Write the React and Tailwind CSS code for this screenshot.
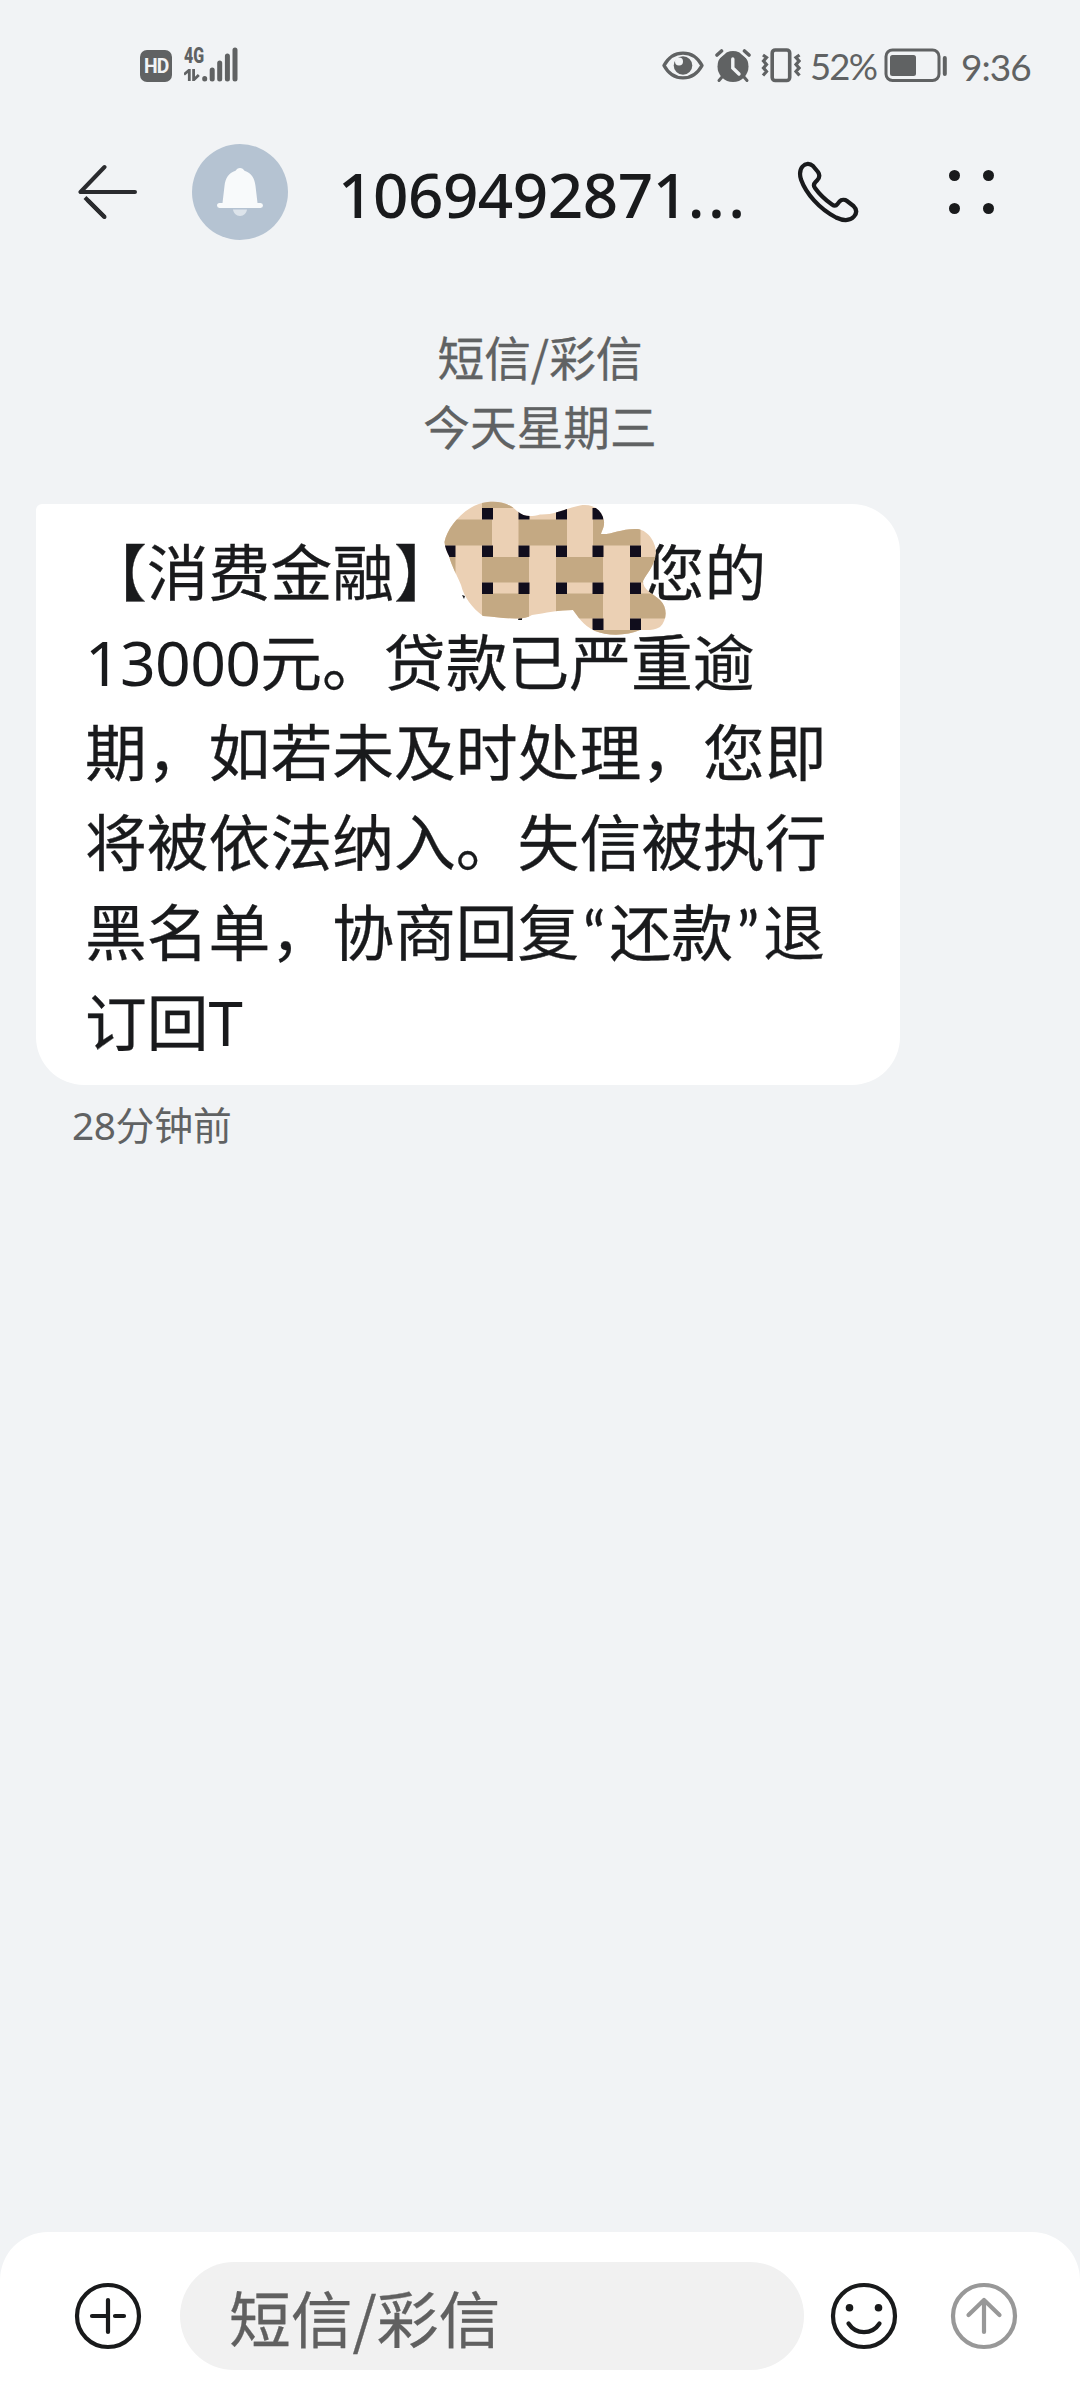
const CJK = "font-['Noto_Sans_CJK_SC',sans-serif]";

function Num({ className = '', children }) {
  return <span className={`font-['Noto_Sans',sans-serif] [-webkit-text-stroke:0px] ${className}`}>{children}</span>;
}

function Quote({ children }) {
  return <span className="inline-block w-[30px] text-center font-['Lato',sans-serif]">{children}</span>;
}

function StatusBar() {
  return (
    <div className="flex h-[130px] justify-between pt-[40px] pr-[49px] pl-[140px] text-[#606263]">
      <div className="flex items-start">
        <div className="mt-[10px] flex h-[32px] w-[32px] items-center justify-center rounded-[7px] bg-[#606263] font-['Roboto',sans-serif] text-[21px] leading-none font-bold tracking-[-1px] text-[#f1f3f5]">
          <span className="scale-x-[0.92]">HD</span>
        </div>
        <div className="mt-[7px] ml-[12px] flex w-[18px] flex-col">
          <span className="block origin-left scale-x-[0.74] font-['Roboto',sans-serif] text-[21.5px] leading-[17px] font-black">4G</span>
          <svg className="mt-[5px]" width="16" height="12" viewBox="0 0 16 12" fill="none" stroke="currentColor" strokeWidth="2.8">
            <path d="M0 5.500L5.300 1V12M9.600 0V11L14.800 6" />
          </svg>
        </div>
        <svg className="mt-[7px]" width="36" height="36" viewBox="0 0 36 36" stroke="currentColor" strokeWidth="5" strokeLinecap="round">
          <path d="M2.700 31.500V32M10.200 23V32M17.700 16V32M25.400 9V32M33 3V32" />
        </svg>
      </div>
      <div className="flex items-start">
        <svg className="mt-[11px]" width="42" height="29" viewBox="0 0 42 29">
          <path d="M2 14.500C11-2 31-2 40 14.500C31 31 11 31 2 14.500Z" fill="none" stroke="currentColor" strokeWidth="3.400" strokeLinejoin="round" />
          <circle cx="21" cy="14.500" r="9.300" fill="currentColor" />
          <circle cx="17" cy="10.500" r="4" fill="#f1f3f5" />
        </svg>
        <svg className="mt-[9px] ml-[11px]" width="36" height="34" viewBox="0 0 36 34" fill="none" stroke="currentColor" strokeWidth="3" strokeLinecap="round">
          <circle cx="18" cy="17.500" r="15.500" fill="currentColor" stroke="none" />
          <path d="M7 28L4 31.500M29 28L32 31.500" />
          <path d="M2 7L8 2M34 7L28 2" stroke="#f1f3f5" strokeWidth="7" />
          <path d="M2 6L6.500 2M34 6L29.500 2" strokeWidth="3.600" />
          <path d="M17.800 10V19L24 25" stroke="#f1f3f5" strokeWidth="3.400" />
        </svg>
        <svg className="mt-[8px] ml-[10px]" width="40" height="35" viewBox="0 0 40 35" fill="none" stroke="currentColor" strokeWidth="3.600">
          <rect x="11.200" y="2" width="17.500" height="30.500" rx="3" />
          <path d="M2 7L5.500 9.500L2.500 13L5.500 16.500L2.500 20L5.500 23.500L2 27.500M38.500 7L35 9.500L38 13L35 16.500L38 20L35 23.500L38.500 27.500" strokeWidth="3.200" />
        </svg>
        <span className="ml-[9px] w-[67px] font-['Lato',sans-serif] text-[36.500px] leading-[53px] tracking-[-1.800px]">52%</span>
        <svg className="mt-[8px] ml-[7px]" width="64" height="35" viewBox="0 0 64 35">
          <rect x="2" y="2" width="53" height="30.500" rx="6.500" fill="none" stroke="currentColor" strokeWidth="3" />
          <rect x="6" y="7" width="26" height="21" rx="2.500" fill="currentColor" />
          <path d="M60.800 10V26" stroke="currentColor" strokeWidth="4" strokeLinecap="round" />
        </svg>
        <span className="ml-[13px] w-[70px] font-['Lato',sans-serif] text-[37px] leading-[53px] tracking-[-1px] whitespace-nowrap">9:36</span>
      </div>
    </div>
  );
}

function Header() {
  return (
    <div className="flex h-[124px] items-center pl-[78px] text-[#191a1c]">
      <svg width="60" height="56" viewBox="0 0 60 56" fill="none" stroke="#2a2b2e" strokeWidth="4" strokeLinecap="round">
        <path d="M26.500 3L2.500 28H57" strokeLinejoin="round" />
        <path d="M26.500 53L7 33.500" strokeLinecap="butt" />
        <path d="M26.500 53L10 36.500" />
      </svg>
      <div className="ml-[54px] flex h-[96px] w-[96px] items-center justify-center rounded-full bg-[#b5c3d2]">
        <svg width="46" height="50" viewBox="0 0 46 50">
          <path d="M16 42.500H30C29.500 46 27 49 23 49S16.500 46 16 42.500Z" fill="#dde4eb" />
          <path d="M23 1C25 1 26.500 2.300 27.500 3.800C34.500 6 37.500 11 38.500 19L40.500 36H43.500A2.500 2.500 0 0 1 43.500 41H2.500A2.500 2.500 0 0 1 2.500 36H5.500L7.500 19C8.500 11 11.500 6 18.500 3.800C19.500 2.300 21 1 23 1Z" fill="#f8fafb" />
        </svg>
      </div>
      <h1 className="mt-[4px] ml-[50px] w-[410px] font-['Noto_Sans',sans-serif] text-[62px] leading-[90px] font-medium tracking-[-0.500px] whitespace-nowrap">
        1069492871<span className="tracking-[3.400px]">...</span>
      </h1>
      <svg className="ml-[49px]" width="62" height="62" viewBox="0 0 62 62" fill="none" stroke="currentColor" strokeWidth="4.200" strokeLinejoin="round">
        <path d="M5.500 5.500C8.500 2 13 2 16 5L21 11C23 14 22.500 17 20 19.500L18.500 21C16.500 23 16.500 25 18 27C23 34 28.500 39 35 43.500C37 45 39 45 40.500 43L42.500 40.500C44.500 38.500 48 38.500 50 40L56.500 45C60 48.500 60 52 57 55.500C53 60 46.500 60 39 56.500C22 47.500 9 32.500 4 18.500C2.500 13.500 2.500 9 5.500 5.500Z" />
      </svg>
      <div className="mb-[1px] ml-[90px] grid grid-cols-2 gap-x-[23px] gap-y-[22px]">
        <i className="size-[11px] rounded-full bg-current" />
        <i className="size-[11px] rounded-full bg-current" />
        <i className="size-[11px] rounded-full bg-current" />
        <i className="size-[11px] rounded-full bg-current" />
      </div>
    </div>
  );
}

const KNOTS = [508, 545.5, 582.5, 618.5].flatMap((y) =>
  [444.5, 482, 518.5, 556, 592.5, 630].map((x) => ({ x, y })),
);

function Mosaic() {
  return (
    <svg className="absolute top-[-4px] left-[406px]" width="230" height="142" viewBox="442 500 230 142">
      <defs>
        <clipPath id="blob">
          <path d="M444.500 542C447 528 463 508 482 503C497 499.500 509 503 517 511C524 517 531 517 540 514.500C556 515 566 508 580 505.500C592 503.500 602 509 604 521C604.500 528 602 530 601 534C611 535 622 528 638 529C649 531 656 543 656 553C654 568 646 574 643 581C643 590 652 593 660 600C668 608 667 620 660 627C654 631 646 630 640 630C627 636 607 636 595 631C582 625 578 616 573 610C559 610 545 613 532 615C522 622 501 617 483 616C472 608 464 597 461 585C456 573 452 567 449 556C447 552 445 548 444.500 542Z" />
        </clipPath>
      </defs>
      <path d="M462 595L465 596L464 599Z M519 617H522V620H518Z" fill="#191a1c" />
      <g clipPath="url(#blob)">
        <rect x="442" y="500" width="230" height="142" fill="#ebd0b4" />
        <path
          fill="#c4a983"
          d="M482 500H529V508H482Z M442 519.500H492V545.500H442Z M518.500 519.500H567V545.500H518.500Z M593 519.500H640.500V545.500H593Z M442 557H455.500V582.500H442Z M482 557H529V582.500H482Z M556 557H603V582.500H556Z M630 557H672V582.500H630Z M482 593.500H529V618.500H482Z M556 593.500H603V618.500H556Z M630 593.500H672V618.500H630Z M593 630H640V642H593Z"
        />
        {KNOTS.map((k) => (
          <rect key={`${k.x}-${k.y}`} x={k.x} y={k.y} width="11" height="11.500" fill="#100d1c" />
        ))}
      </g>
    </svg>
  );
}

function Line({ children }) {
  return <p className="h-[90px]">{children}</p>;
}

function Message() {
  return (
    <div className={`relative mt-[45px] ml-[36px] h-[581px] w-[864px] rounded-[48px] rounded-tl-[6px] bg-white pt-[20px] pl-[49px] text-[61.800px] leading-[90px] whitespace-nowrap text-[#191a1c] [-webkit-text-stroke:0.3px_#191a1c] ${CJK}`}>
      <Line>【消费金融】<span className="ml-[187px]">您的</span></Line>
      <Line><Num className="text-[62.500px] tracking-[-0.700px]">13000</Num>元。贷款已严重逾</Line>
      <Line>期，如若未及时处理，您即</Line>
      <Line>将被依法纳入。失信被执行</Line>
      <Line>
        黑名单，协商回复<Quote>“</Quote>还款<Quote>”</Quote>退
      </Line>
      <Line>订回<Num>T</Num></Line>
      <Mosaic />
    </div>
  );
}

function Composer() {
  return (
    <div className="flex h-[168px] items-start rounded-t-[48px] bg-white pt-[30px] pl-[74px] text-[#191a1b]">
      <svg className="mt-[20px]" width="68" height="68" viewBox="0 0 68 68" fill="none" stroke="currentColor" strokeWidth="4.200" strokeLinecap="round">
        <circle cx="34" cy="34" r="31" />
        <path d="M34 18V50M18 34H34M41 34H50" />
      </svg>
      <div className={`ml-[38px] h-[108px] w-[624px] rounded-full bg-[#f1f1f1] pl-[49px] text-[61.800px] leading-[109px] text-[#606060] [-webkit-text-stroke:0.3px_#606060] ${CJK}`}>
        短信/彩信
      </div>
      <svg className="mt-[20px] ml-[26px]" width="68" height="68" viewBox="0 0 68 68" fill="none" stroke="currentColor" strokeWidth="4.200" strokeLinecap="round">
        <circle cx="34" cy="34" r="31" />
        <path d="M18.500 41.500C26 53 42 53 49.500 41.500" />
        <circle cx="19.500" cy="25.700" r="3.800" fill="currentColor" stroke="none" />
        <circle cx="48.500" cy="25.700" r="3.800" fill="currentColor" stroke="none" />
      </svg>
      <svg className="mt-[20px] ml-[52px] text-[#989898]" width="68" height="68" viewBox="0 0 68 68" fill="none" stroke="currentColor" strokeWidth="4.200" strokeLinecap="round" strokeLinejoin="round">
        <circle cx="34" cy="34" r="31" />
        <path d="M34 50V18M18.500 33L34 18L49.500 33" />
      </svg>
    </div>
  );
}

export default function App() {
  return (
    <div className="flex h-[2400px] w-[1080px] flex-col overflow-hidden bg-[#f1f3f5]">
      <StatusBar />
      <Header />
      <div className={`mt-[67px] text-center text-[46.700px] leading-[69px] text-[#606263] [-webkit-text-stroke:0.3px_#606263] ${CJK}`}>
        <p>短信/彩信</p>
        <p>今天星期三</p>
      </div>
      <Message />
      <p className={`mt-[9px] ml-[72px] text-[38.800px] leading-[58px] text-[#606263] ${CJK}`}>
        <Num className="tracking-[-0.500px]">28</Num>分钟前
      </p>
      <div className="flex-1" />
      <Composer />
    </div>
  );
}
